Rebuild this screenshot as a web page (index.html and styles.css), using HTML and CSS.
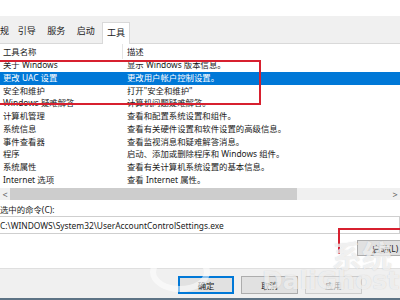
FILE: index.html
```html
<!DOCTYPE html>
<html>
<head>
<meta charset="utf-8">
<link rel="stylesheet" href="styles.css">
</head>
<body>
<div class="page">
  <div class="top"></div>
  <div class="tabs">
    <div class="tab first">常规</div>
    <div class="tab">引导</div>
    <div class="tab">服务</div>
    <div class="tab">启动</div>
    <div class="tab active">工具</div>
  </div>
  <div class="list">
    <div class="row head"><span class="c1">工具名称</span><span class="c2">描述</span></div>
    <div class="rows">
      <div class="row"><span class="c1">关于 Windows</span><span class="c2">显示 Windows 版本信息。</span></div>
      <div class="row sel"><span class="c1">更改 UAC 设置</span><span class="c2">更改用户帐户控制设置。</span></div>
      <div class="row"><span class="c1">安全和维护</span><span class="c2">打开"安全和维护"</span></div>
      <div class="row"><span class="c1">Windows 疑难解答</span><span class="c2">计算机问题疑难解答。</span></div>
      <div class="row"><span class="c1">计算机管理</span><span class="c2">查看和配置系统设置和组件。</span></div>
      <div class="row"><span class="c1">系统信息</span><span class="c2">查看有关硬件设置和软件设置的高级信息。</span></div>
      <div class="row"><span class="c1">事件查看器</span><span class="c2">查看监视消息和疑难解答消息。</span></div>
      <div class="row"><span class="c1">程序</span><span class="c2">启动、添加或删除程序和 Windows 组件。</span></div>
      <div class="row"><span class="c1">系统属性</span><span class="c2">查看有关计算机系统设置的基本信息。</span></div>
      <div class="row"><span class="c1">Internet 选项</span><span class="c2">查看 Internet 属性。</span></div>
      <div class="row"><span class="c1">Internet 协议配置</span><span class="c2">查看和配置网络地址设置。</span></div>
    </div>
    <div class="hscroll">
      <span class="arrow">&lt;</span>
      <div class="track"><div class="thumb"></div></div>
      <span class="arrow">&gt;</span>
    </div>
  </div>
  <div class="cmd-label">选中的命令(C):</div>
  <div class="cmd-box">C:\WINDOWS\System32\UserAccountControlSettings.exe</div>
  <div class="launch-row"><button class="btn launch">启动(L)</button></div>
  <div class="footer">
    <button class="btn ok">确定</button>
    <button class="btn">取消</button>
    <button class="btn disabled">应用</button>
  </div>
</div>
<div class="mark box1"></div>
<div class="mark box2"></div>
<div class="wm wm-cn">系统</div>
<div class="wm wm-en">DaliGhost.com</div>
<div class="wm-logo"></div>
</body>
</html>
```
FILE: styles.css
```css
html, body {
  margin: 0;
  padding: 0;
  width: 400px;
  height: 300px;
  overflow: hidden;
  background: #fff;
  font-family: "Noto Sans", "Noto Sans CJK SC", sans-serif;
  font-size: 8.4px;
  color: #1a1a1a;
  position: relative;
}
.page {
  display: flex;
  flex-direction: column;
  height: 300px;
}
.top { height: 16px; background: #fff; }
.tabs {
  height: 28px;
  box-sizing: border-box;
  background: #f0f0f0;
  border-bottom: 1px solid #d9d9d9;
  display: flex;
  align-items: flex-end;
}
.tab {
  width: 29.5px;
  height: 20px;
  line-height: 15px;
  text-align: center;
  font-size: 9px;
  box-sizing: border-box;
  color: #222;
  flex: none;
}
.tab.first { width: 24px; margin-left: -12px; }
.tab.active {
  background: #fff;
  border: 1px solid #d9d9d9;
  border-bottom: none;
  height: 22px;
  margin-bottom: -1px;
  padding-top: 2px;
  width: 28px;
  margin-left: 1.5px;
}
.list {
  display: flex;
  flex-direction: column;
  height: 156px;
  background: #fff;
}
.row {
  display: flex;
  height: 12.75px;
  line-height: 12.75px;
  white-space: nowrap;
}
.row.head {
  height: 15px;
  line-height: 15px;
  color: #222;
}
.row.head .c1 { border-right: 1px solid #e5e5e5; }
.c1 { width: 123px; padding-left: 3px; box-sizing: border-box; flex: none; }
.c2 { padding-left: 4px; }
.rows {
  flex: 1;
  overflow: hidden;
}
.row.sel { background: #0078d7; color: #fff; }
.hscroll {
  height: 12px;
  display: flex;
  align-items: center;
  background: #f0f0f0;
  font-size: 9px;
  color: #606060;
}
.arrow { width: 10px; text-align: center; flex: none; }
.track { flex: 1; height: 12px; display: flex; align-items: center; }
.thumb { width: 287px; height: 12px; background: #cdcdcd; }
.cmd-label {
  height: 16px;
  line-height: 19px;
}
.cmd-box {
  height: 18px;
  line-height: 17px;
  box-sizing: border-box;
  border: 1px solid #cfcfcf;
  margin-left: -1px;
  white-space: nowrap;
}
.launch-row {
  height: 34px;
  display: flex;
  justify-content: flex-end;
  align-items: flex-start;
  padding-top: 6px;
  box-sizing: border-box;
}
.btn {
  font-family: inherit;
  font-size: 8.4px;
  color: #222;
  background: #e1e1e1;
  border: 1px solid #adadad;
  height: 18px;
  width: 57px;
  padding: 0;
  box-sizing: border-box;
}
.launch { height: 16px; width: 60px; margin-right: -17px; text-align: left; padding-left: 14px; }
.footer {
  height: 32px;
  background: #f0f0f0;
  border-top: 1px solid #dfdfdf;
  border-bottom: 2px solid #5d7385;
  box-sizing: border-box;
  display: flex;
  align-items: flex-start;
  justify-content: flex-end;
  padding-top: 7px;
  padding-right: 38px;
  gap: 7px;
}
.btn.ok { border: 2px solid #0078d7; width: 56px; }
.btn.disabled { color: #a0a0a0; background: #ececec; border-color: #cccccc; }
.mark {
  position: absolute;
  border: 2px solid #d7202f;
  box-sizing: border-box;
}
.box1 { left: -4px; top: 60px; width: 265px; height: 45px; }
.box2 { left: 338px; top: 228px; width: 80px; height: 26px; border-bottom: none; }
.wm {
  position: absolute;
  font-family: "DejaVu Sans", sans-serif;
  font-weight: bold;
  color: rgba(255,255,255,0.7);
  text-shadow: 0 0 1px rgba(120,120,120,0.35);
  white-space: nowrap;
}
.wm-cn { left: 332px; top: 232px; font-size: 30px; font-family: "Noto Sans CJK SC", sans-serif; }
.wm-en { left: 262px; top: 266px; font-size: 25px; }
.wm-logo {
  position: absolute;
  left: 150px;
  top: 252px;
  width: 60px;
  height: 40px;
  border-radius: 50%;
  border: 6px solid rgba(255,255,255,0.55);
  box-sizing: border-box;
}
```
